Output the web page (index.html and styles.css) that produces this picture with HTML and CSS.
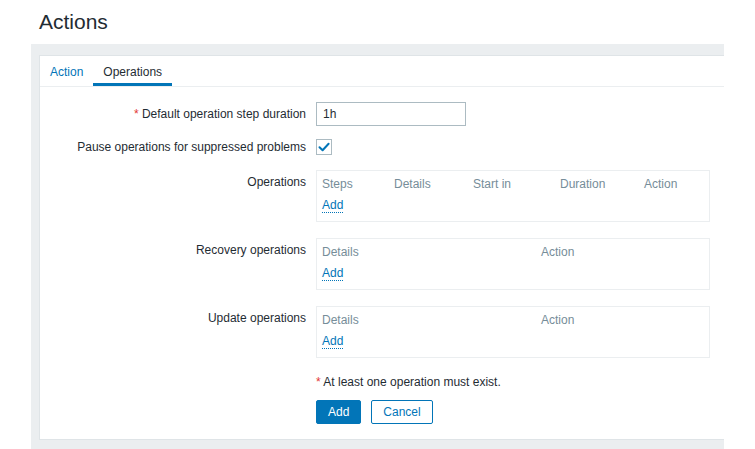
FILE: index.html
```html
<!DOCTYPE html>
<html>
<head>
<meta charset="utf-8">
<title>Actions</title>
<link rel="stylesheet" href="styles.css">
</head>
<body>
<div class="page">
  <header class="page-header"><h1>Actions</h1></header>
  <main class="wrap">
    <div class="panel">
      <nav class="tabs">
        <a class="tab">Action</a>
        <a class="tab active">Operations</a>
      </nav>
      <form class="form">
        <div class="row row-center gap13">
          <label class="lbl"><span class="req">*</span> Default operation step duration</label>
          <div class="field"><input class="text" type="text" value="1h"></div>
        </div>
        <div class="row row-center gap15">
          <label class="lbl">Pause operations for suppressed problems</label>
          <div class="field">
            <span class="checkbox">
              <svg width="14" height="14" viewBox="0 0 14 14"><path d="M2.5 7.2 L5.6 10.2 L11.6 3.8" fill="none" stroke="#0275b8" stroke-width="2" stroke-linecap="round" stroke-linejoin="round"/></svg>
            </span>
          </div>
        </div>
        <div class="row gap16">
          <label class="lbl lbl-top">Operations</label>
          <div class="field">
            <div class="opbox">
              <div class="ophead cols5"><span>Steps</span><span>Details</span><span>Start in</span><span>Duration</span><span>Action</span></div>
              <div class="opadd"><a class="link">Add</a></div>
            </div>
          </div>
        </div>
        <div class="row gap16">
          <label class="lbl lbl-top">Recovery operations</label>
          <div class="field">
            <div class="opbox">
              <div class="ophead cols2"><span>Details</span><span>Action</span></div>
              <div class="opadd"><a class="link">Add</a></div>
            </div>
          </div>
        </div>
        <div class="row gap17">
          <label class="lbl lbl-top">Update operations</label>
          <div class="field">
            <div class="opbox">
              <div class="ophead cols2"><span>Details</span><span>Action</span></div>
              <div class="opadd"><a class="link">Add</a></div>
            </div>
          </div>
        </div>
        <div class="row gap11">
          <span class="lbl"></span>
          <div class="field note"><span class="req">*</span> At least one operation must exist.</div>
        </div>
        <div class="row">
          <span class="lbl"></span>
          <div class="field buttons">
            <button type="button" class="btn btn-primary">Add</button>
            <button type="button" class="btn btn-alt">Cancel</button>
          </div>
        </div>
      </form>
    </div>
  </main>
</div>
</body>
</html>
```

FILE: styles.css
```css
* { box-sizing: border-box; }

html, body {
  margin: 0;
  padding: 0;
  background: #ffffff;
}

body {
  font-family: "Liberation Sans", Arial, sans-serif;
  font-size: 12px;
  line-height: 14px;
  color: #1f2c33;
}

.page {
  padding-left: 31px;
  width: 724px;
}

.page-header {
  padding: 10px 0 10px 8px;
}

.page-header h1 {
  margin: 0;
  font-size: 21px;
  line-height: 24px;
  font-weight: normal;
  color: #1f2c33;
}

.wrap {
  background: #ebeef0;
  padding: 11px 0 10px 8px;
}

.panel {
  background: #ffffff;
  border: 1px solid #dfe4e7;
  border-right: none;
}

.tabs {
  display: flex;
  border-bottom: 1px solid #ebeef0;
  height: 31px;
}

.tab {
  display: block;
  padding: 9px 10px 4px;
  line-height: 14px;
  height: 30px;
  color: #0275b8;
  border-bottom: 3px solid transparent;
}

.tab.active {
  color: #1f2c33;
  border-bottom-color: #0275b8;
}

.form {
  padding: 15px 0 15px 0;
}

.row {
  display: grid;
  grid-template-columns: 266px 394px;
  column-gap: 10px;
  align-items: start;
}

.row-center { align-items: center; }

.gap11 { margin-bottom: 11px; }
.gap13 { margin-bottom: 13px; }
.gap15 { margin-bottom: 15px; }
.gap16 { margin-bottom: 16px; }
.gap17 { margin-bottom: 17px; }

.lbl {
  text-align: right;
  color: #1f2c33;
}

.lbl-top { padding-top: 5px; }

.req {
  color: #e33734;
}

.text {
  display: block;
  width: 150px;
  height: 24px;
  border: 1px solid #acbbc2;
  padding: 0 6px;
  font-family: "Liberation Sans", Arial, sans-serif;
  font-size: 12px;
  color: #1f2c33;
  background: #ffffff;
  margin: 0;
  outline: none;
}

.checkbox {
  display: flex;
  align-items: center;
  justify-content: center;
  width: 16px;
  height: 16px;
  border: 1px solid #acbbc2;
  background: #ffffff;
}

.opbox {
  border: 1px solid #ebeef0;
  padding: 6px 5px 7px;
  height: 52px;
}

.ophead {
  display: grid;
  color: #768d99;
  line-height: 14px;
}

.cols5 { grid-template-columns: 72px 79px 87px 84px 1fr; }
.cols2 { grid-template-columns: 219px 1fr; }

.opadd {
  margin-top: 7px;
  line-height: 14px;
}

.link {
  color: #0275b8;
  border-bottom: 1px dotted #0275b8;
  cursor: pointer;
}

.note {
  color: #1f2c33;
}

.buttons {
  display: flex;
  gap: 10px;
}

.btn {
  height: 24px;
  padding: 0 11px;
  border: 1px solid #0275b8;
  font-family: "Liberation Sans", Arial, sans-serif;
  font-size: 12px;
  line-height: 22px;
  margin: 0;
  border-radius: 2px;
}

.btn-primary {
  background: #0275b8;
  color: #ffffff;
}

.btn-alt {
  background: #ffffff;
  color: #0275b8;
}
```
